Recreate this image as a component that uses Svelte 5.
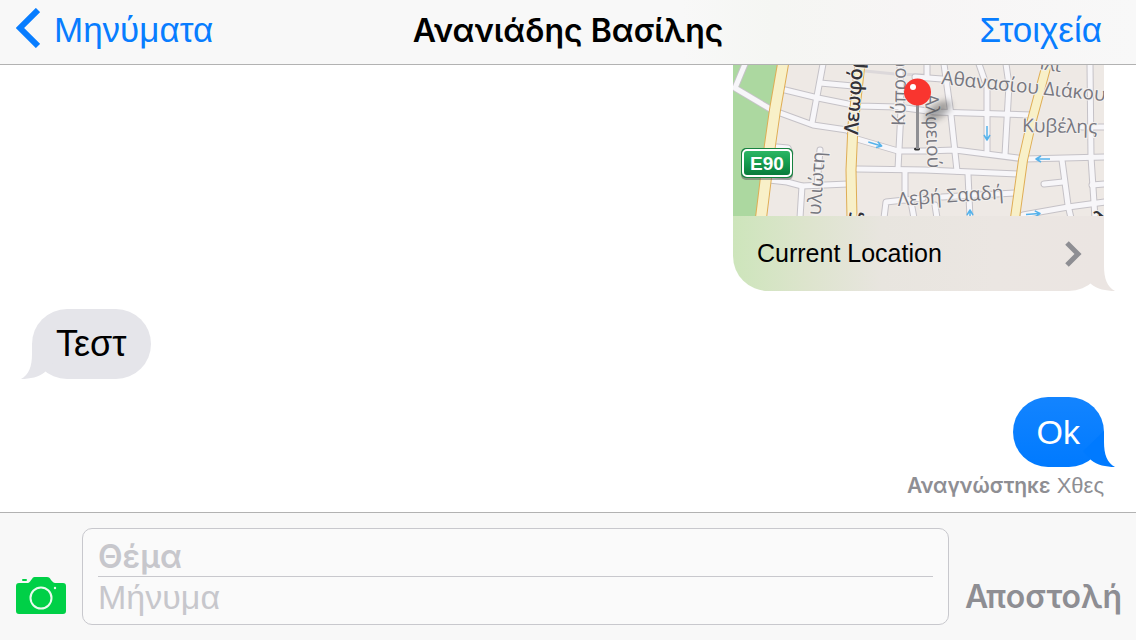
<script>
	let subject = $state("");
	let message = $state("");

	const streets = [
		"M12 -1L2 23L39 45L80 60L114 65L124 74L165 86L192 86L222 85L292 94L371 92",
		"M48 24L85 33L125 41L165 42L202 47L299 50",
		"M90 -1L79 58",
		"M87 18L120 21",
		"M167 -1L168 45L165 104",
		"M124 104L192 105L285 109",
		"M36 115L54 117L69 121L115 119",
		"M69 121L67 153",
		"M87 85L84 120",
		"M44 82L55 83L57 88",
		"M172 106L172 135",
		"M151 153L153 137L190 133",
		"M178 137L181 153",
		"M194 -1L194 12",
		"M182 12L209 14",
		"M211 -1L218 50L224 106",
		"M246 -1L254 22L254 86",
		"M273 -1L276 20L272 90",
		"M357 -1L358 92L362 153",
		"M329 95L335 140L338 153",
		"M311 119L330 117",
		"M290 150L335 142L372 137",
		"M349 62L372 62",
		"M359 120L372 119",
		"M235 109L237 153",
		"M202 140L204 153",
		"M209 132L282 128"
	];

	const avenues = [
		{ d: "M50 -1L42 45L37 80L28 153", width: 10 },
		{ d: "M127 -1L120 60L118 105L119 153", width: 9 },
		{ d: "M314 -1L299 55L290 95L282 153", width: 8 }
	];

	const arrows = [
		{ x: 142, y: 79, turn: 17 },
		{ x: 254, y: 68, turn: 90 },
		{ x: 310, y: 94, turn: 180 },
		{ x: 300, y: 149, turn: -4 },
		{ x: 237, y: 152, turn: -90 }
	];

	const labels = [
		{ text: "Λεωφόρος", x: 125, y: 70, turn: -86, main: true },
		{ text: "ς", x: 127, y: 157, turn: -88, main: true },
		{ text: "Κύπρου", x: 172, y: 61, turn: -89 },
		{ text: "Αλφειού", x: 192, y: 29, turn: 88 },
		{ text: "Βουλιώτη", x: 92, y: 87, turn: -86, end: true },
		{ text: "Αθανασίου Διάκου", x: 208, y: 19, turn: 6 },
		{ text: "Κυβέλης", x: 289, y: 67, turn: 1 },
		{ text: "Λεβή Σααδή", x: 165, y: 141, turn: -4 },
		{ text: "Ιλι", x: 306, y: 4, turn: 8 },
		{ text: "λ", x: 367, y: 161, turn: -30, main: true }
	];
</script>

{#snippet tail()}
	<svg class="tail" width="36" height="36" viewBox="0 0 36 36" aria-hidden="true">
		<path d="M25 0V11C25 23 28 32 36 36C27 36 18 34 12 29L4 20Z" />
	</svg>
{/snippet}

<div class="app">
	<header>
		<button class="link back">
			<svg width="24" height="40" viewBox="0 0 24 40" aria-hidden="true">
				<path d="M22 2L4 20L22 38" fill="none" stroke="currentColor" stroke-width="6" />
			</svg>
			Μηνύματα
		</button>
		<h1>Ανανιάδης Βασίλης</h1>
		<button class="link details">Στοιχεία</button>
	</header>

	<main>
		<article class="place">
			<svg class="map" viewBox="0 0 371 151" role="img" aria-label="Χάρτης">
				<defs>
					<linearGradient id="badge" x2="0" y2="1">
						<stop offset="0" stop-color="#2fb866" />
						<stop offset="0.5" stop-color="#159c4e" />
						<stop offset="1" stop-color="#08783a" />
					</linearGradient>
					<filter id="soft" x="-50%" y="-50%" width="200%" height="200%">
						<feGaussianBlur stdDeviation="3" />
					</filter>
				</defs>
				<rect width="371" height="151" fill="#eee9e5" />
				<path d="M0 0H50L42 45L37 80L28 151H0Z" fill="#acd8a0" />

				<g fill="none" stroke-linejoin="round">
					<path d="M132 6L162 9L192 10" stroke="#dcd8da" stroke-width="3" />
					{#each streets as d}
						<path {d} stroke="#c5c2c7" stroke-width="7" stroke-linecap="round" />
					{/each}
					{#each streets as d}
						<path {d} stroke="#f7f6f9" stroke-width="5" stroke-linecap="round" />
					{/each}
					{#each avenues as road}
						<path d={road.d} stroke="#dfad54" stroke-width={road.width + 2} />
						<path d={road.d} stroke="#f8f0c8" stroke-width={road.width} />
					{/each}
					{#each arrows as a}
						<path
							d="M-7 0H6M2 -3L7 0L2 3"
							transform="translate({a.x} {a.y}) rotate({a.turn})"
							stroke="#55b2ea"
							stroke-width="1.5"
						/>
					{/each}
				</g>

				{#each labels as label}
					<text
						class:main={label.main}
						text-anchor={label.end ? "end" : "start"}
						transform="translate({label.x} {label.y}) rotate({label.turn})"
					>{label.text}</text>
				{/each}

				<rect x="8" y="85" width="52" height="30" rx="5" fill="#555" opacity="0.5" />
				<rect x="8" y="83" width="52" height="30" rx="5" fill="#16823f" />
				<rect x="10" y="85" width="48" height="26" rx="4" fill="url(#badge)" stroke="#fff" stroke-width="2" />
				<text class="route" x="34" y="105" text-anchor="middle">E90</text>

				<ellipse cx="205" cy="46" rx="15" ry="7" fill="#444" opacity="0.45" transform="rotate(-35 205 46)" filter="url(#soft)" />
				<ellipse cx="184" cy="84" rx="3" ry="1.5" fill="#333" />
				<path d="M184.500 38V84" stroke="#8f8f93" stroke-width="3" />
				<circle cx="184.500" cy="27" r="13.500" fill="#f9352f" />
				<circle cx="180" cy="22" r="3" fill="#fff" />
			</svg>
			<button class="place-bar">
				Current Location
				<svg width="18" height="26" viewBox="0 0 18 26" aria-hidden="true">
					<path d="M3 2L14 13L3 24" fill="none" stroke="#8e8e93" stroke-width="5" />
				</svg>
			</button>
			{@render tail()}
		</article>

		<p class="bubble received">Τεστ{@render tail()}</p>
		<p class="bubble sent">Ok{@render tail()}</p>
		<p class="receipt"><b>Αναγνώστηκε</b> Χθες</p>
	</main>

	<footer>
		<button class="camera" aria-label="Κάμερα">
			<svg width="50" height="38" viewBox="0 0 50 38">
				<rect x="6" y="3" width="5" height="2" rx="1" fill="#00d047" />
				<path
					d="M3 7H11C14 7 14 5 16 3C17 1 18 1 20 1H31C33 1 34 2 35 4C37 6 37 7 40 7H47Q50 7 50 10V35Q50 38 47 38H3Q0 38 0 35V10Q0 7 3 7Z"
					fill="#00d047"
				/>
				<circle cx="25" cy="22" r="10.500" fill="none" stroke="#e9fbef" stroke-width="2" />
				<circle cx="39" cy="12" r="1.200" fill="#e9fbef" />
			</svg>
		</button>
		<div class="fields">
			<input class="subject" bind:value={subject} placeholder="Θέμα" aria-label="Θέμα" />
			<input bind:value={message} placeholder="Μήνυμα" aria-label="Μήνυμα" />
		</div>
		<button class="send">Αποστολή</button>
	</footer>
</div>

<style>
	:global(body) {
		margin: 0;
	}

	.app {
		display: flex;
		flex-direction: column;
		height: 100vh;
		background: #fff;
		color: #000;
		font-family: "Liberation Sans", Arial, sans-serif;
		font-size: 34px;
	}

	button {
		padding: 0;
		border: none;
		background: none;
		color: inherit;
		font: inherit;
		cursor: pointer;
	}

	header {
		box-sizing: border-box;
		display: grid;
		grid-template-columns: 1fr auto 1fr;
		align-items: center;
		height: 65px;
		padding: 0 16px 4px;
		background: linear-gradient(to right, #f8f8f8 60%, #f5f6f3 68%, #f7f5f5 80%, #f8f8f8);
		border-bottom: 1px solid #b2b2b2;
	}

	h1 {
		margin: 0;
		font-family: Inter, sans-serif;
		font-size: 32px;
		font-weight: 600;
	}

	.link {
		color: #087dff;
		font-size: 35px;
	}

	.back {
		display: flex;
		align-items: center;
		justify-self: start;
		gap: 14px;
	}

	.back svg {
		margin-bottom: 4px;
	}

	.details {
		justify-self: end;
		margin-right: 18px;
	}

	main {
		flex: 1;
		display: flex;
		flex-direction: column;
		justify-content: flex-end;
		gap: 18px;
		min-height: 0;
		padding: 0 32px 12px;
		overflow: hidden;
	}

	.place {
		position: relative;
		align-self: flex-end;
		width: 371px;
	}

	.map {
		display: block;
		width: 100%;
	}

	.map text {
		fill: #77777f;
		font-family: "Open Sans", sans-serif;
		font-size: 19px;
		stroke: #f3f0ee;
		stroke-width: 2px;
		paint-order: stroke;
	}

	.map .main {
		fill: #333338;
		font-size: 20px;
		font-weight: 600;
	}

	.map .route {
		fill: #fff;
		font-family: "Liberation Sans", sans-serif;
		font-size: 19px;
		font-weight: 700;
		stroke: none;
	}

	.place-bar {
		display: flex;
		align-items: center;
		justify-content: space-between;
		width: 100%;
		height: 75px;
		padding: 0 22px 0 24px;
		border-radius: 0 0 35px 35px;
		background: linear-gradient(to right, #cde5bb, #dde4cd 20%, #e8e5df 40%, #ebe6e2 70%, #ebe5e2);
		font-size: 25px;
	}

	.tail {
		position: absolute;
		right: -11px;
		bottom: 0;
		fill: #ebe5e2;
	}

	.bubble {
		position: relative;
		margin: 0;
		padding: 0 24px;
		border-radius: 35px;
		line-height: 70px;
	}

	.received {
		align-self: flex-start;
		background: #e5e5ea;
		font-size: 36px;
	}

	.received .tail {
		right: auto;
		left: -11px;
		transform: scaleX(-1);
		fill: #e5e5ea;
	}

	.sent {
		align-self: flex-end;
		background: linear-gradient(#1384ff, #007aff);
		color: #fff;
	}

	.sent .tail {
		fill: #007aff;
	}

	.receipt {
		align-self: flex-end;
		margin: -13px 0 0;
		color: #8e8e93;
		font-size: 22px;
		line-height: 28px;
	}

	.receipt b {
		font-family: Inter, sans-serif;
		font-weight: 600;
		font-size: 21px;
	}

	footer {
		display: flex;
		align-items: flex-end;
		gap: 16px;
		padding: 15px 14px 15px 16px;
		background: #f8f8f8;
		border-top: 1px solid #b2b2b2;
	}

	.camera {
		display: flex;
		margin-bottom: 11px;
	}

	.fields {
		flex: 1;
		display: flex;
		flex-direction: column;
		padding: 8px 15px 6px;
		border: 1px solid #c8c8cd;
		border-radius: 10px;
		background: #fafafa;
	}

	input {
		box-sizing: border-box;
		width: 100%;
		height: 41px;
		padding: 0;
		border: none;
		outline: none;
		background: none;
		font: inherit;
	}

	input::placeholder {
		color: #c7c7cc;
		opacity: 1;
	}

	.subject {
		height: 40px;
		border-bottom: 1px solid #c8c8cd;
		font-family: Inter, sans-serif;
		font-size: 32px;
		font-weight: 600;
	}

	.send {
		color: #8e8e93;
		font-family: Inter, sans-serif;
		font-size: 32px;
		font-weight: 600;
		line-height: 38px;
		margin-bottom: 9px;
	}
</style>
